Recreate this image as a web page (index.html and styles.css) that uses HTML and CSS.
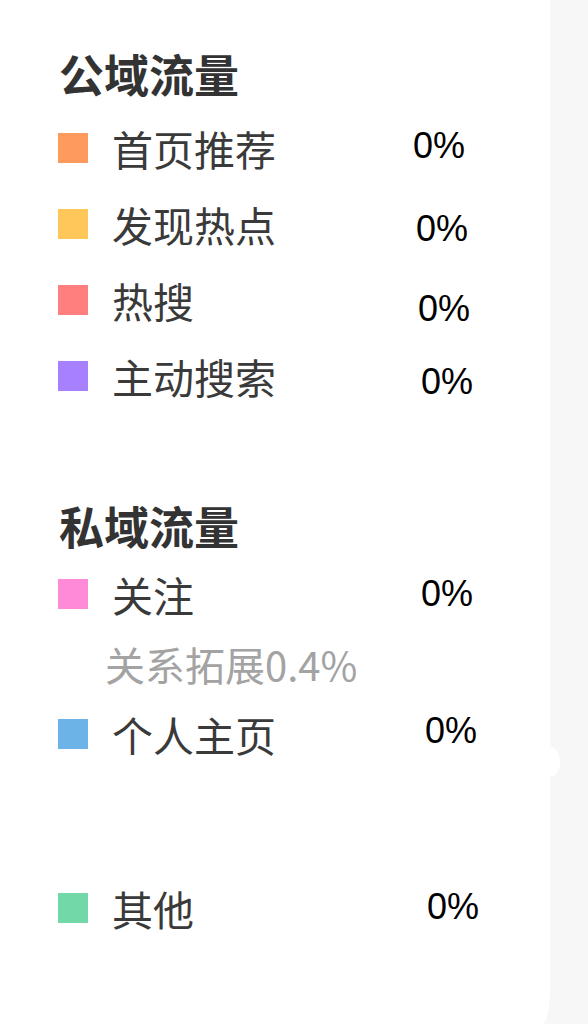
FILE: index.html
```html
<!DOCTYPE html>
<html lang="zh-CN">
<head>
<meta charset="utf-8">
<title>流量来源</title>
<link rel="stylesheet" href="styles.css">
</head>
<body>
<div class="panel">
  <section class="group group-public">
    <h2 class="title">公域流量</h2>
    <ul class="list">
      <li class="row"><span class="swatch orange"></span><span class="name">首页推荐</span><span class="pct p0">0%</span></li>
      <li class="row"><span class="swatch yellow"></span><span class="name">发现热点</span><span class="pct p1">0%</span></li>
      <li class="row"><span class="swatch red"></span><span class="name">热搜</span><span class="pct p2">0%</span></li>
      <li class="row"><span class="swatch purple"></span><span class="name">主动搜索</span><span class="pct p3">0%</span></li>
    </ul>
  </section>
  <section class="group group-private">
    <h2 class="title">私域流量</h2>
    <ul class="list">
      <li class="row"><span class="swatch pink"></span><span class="name">关注</span><span class="pct p4">0%</span></li>
      <li class="sub">关系拓展0.4%</li>
      <li class="row"><span class="swatch blue"></span><span class="name">个人主页</span><span class="pct p5">0%</span></li>
    </ul>
  </section>
  <section class="group group-other">
    <ul class="list">
      <li class="row"><span class="swatch green"></span><span class="name">其他</span><span class="pct p6">0%</span></li>
    </ul>
  </section>
</div>
</body>
</html>
```
FILE: styles.css
```css
html, body {
  margin: 0;
  padding: 0;
  background: #f7f7f7;
  height: 1024px;
  overflow: hidden;
}

.panel {
  position: relative;
  width: 550px;
  height: 1024px;
  background: #ffffff;
  border-bottom-right-radius: 8px 34px;
  box-sizing: border-box;
  padding-top: 46px;
  font-family: "Noto Sans CJK SC", "Noto Sans", sans-serif;
  color: #363636;
}

.panel::after {
  content: "";
  position: absolute;
  right: -10px;
  top: 747px;
  width: 20px;
  height: 30px;
  border-radius: 50%;
  background: #ffffff;
}

.group {
  display: flex;
  flex-direction: column;
}

.title {
  margin: 0;
  padding-left: 59px;
  font-size: 45px;
  line-height: 56px;
  font-weight: 700;
  color: #333333;
}

.group-public .title { margin-bottom: 8px; }
.group-private { margin-top: 84px; }
.group-private .title { margin-bottom: 2px; }
.group-other { margin-top: 98px; }

.list {
  list-style: none;
  margin: 0;
  padding: 0;
}

.row {
  display: grid;
  grid-template-columns: 30px 277px auto;
  column-gap: 24px;
  align-items: center;
  height: 76px;
  padding-left: 58px;
}

.swatch {
  width: 30px;
  height: 30px;
}

.orange { background: #ff9a5f; }
.yellow { background: #ffc65a; }
.red    { background: #ff7f7f; }
.purple { background: #a780ff; }
.pink   { background: #ff8ad8; }
.blue   { background: #6cb3e8; }
.green  { background: #72d8a8; }

.name {
  font-size: 41px;
  line-height: 50px;
  color: #3a3a3a;
  white-space: nowrap;
}

.pct {
  font-family: "Liberation Sans", Arial, sans-serif;
  font-size: 36px;
  line-height: 40px;
  color: #000000;
}

.p0 { margin-left: 0; margin-top: -4px; }
.p1 { margin-left: 3px; margin-top: 10px; }
.p2 { margin-left: 5px; margin-top: 18px; }
.p3 { margin-left: 8px; margin-top: 12px; }
.p4 { margin-left: 8px; margin-top: 0; }
.p5 { margin-left: 12px; margin-top: -6px; }
.p6 { margin-left: 14px; margin-top: -2px; }

.sub {
  height: 64px;
  line-height: 64px;
  padding-left: 105px;
  font-size: 40px;
  color: #a3a3a3;
  white-space: nowrap;
}
```
